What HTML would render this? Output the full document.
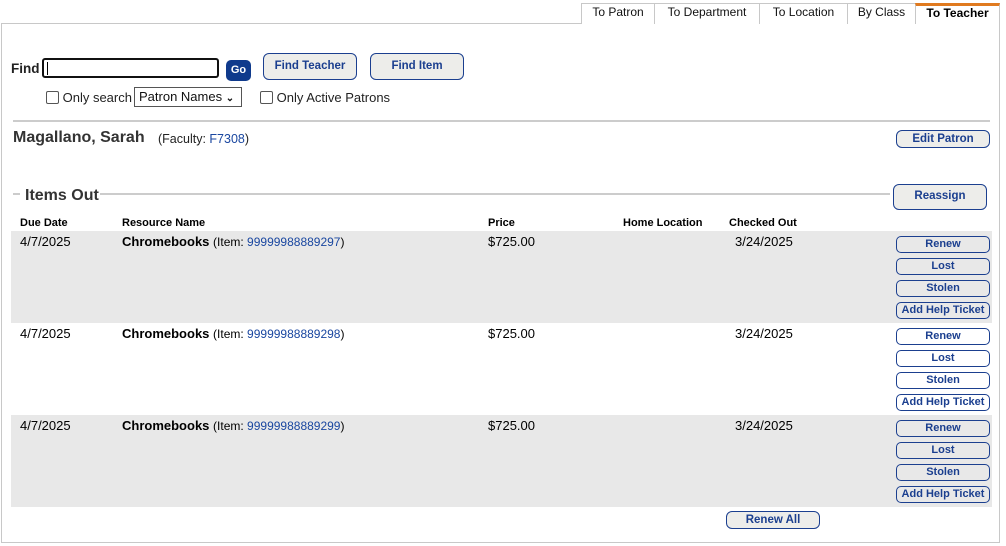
<!DOCTYPE html>
<html><head><meta charset="utf-8"><style>
*{box-sizing:border-box;margin:0;padding:0}
body{width:1006px;height:546px;background:#fff;font-family:"Liberation Sans",Arial,sans-serif;color:#000;position:relative;overflow:hidden}
.a{position:absolute;white-space:nowrap}
.tab{position:absolute;top:3px;height:21px;border:1px solid #c8c8c8;border-bottom:none;font-size:12px;text-align:center;line-height:17px;color:#111;background:#fff}
.box{position:absolute;left:1px;top:23px;width:999px;height:520px;border:1px solid #c8c8c8}
.btn{position:absolute;border:1px solid #1b3f8f;border-radius:6px;background:#ededea;color:#1b3f8f;font-family:"Liberation Sans",Arial,sans-serif;font-weight:bold;font-size:11.5px;text-align:center}
.sb{position:absolute;left:896px;width:94px;height:17px;border:1px solid #1b3f8f;border-radius:5px;color:#1b3f8f;font-family:"Liberation Sans",Arial,sans-serif;font-weight:bold;font-size:11px;line-height:15px;text-align:center;background:transparent}
.row{position:absolute;left:11px;width:981px;height:92px}
.t{font-size:13px}
.lnk{color:#1a47a0}
.hd{font-size:11px;font-weight:bold;top:217px}
.cb{display:inline-block;width:13px;height:13px;border:1px solid #555;border-radius:2px;vertical-align:-2px;background:#fff}
</style></head><body>
<div class="box"></div>
<div class="tab" style="left:581px;width:74px">To Patron</div>
<div class="tab" style="left:654px;width:106px">To Department</div>
<div class="tab" style="left:759px;width:89px">To Location</div>
<div class="tab" style="left:847px;width:69px">By Class</div>
<div class="tab" style="left:915px;width:85px;border-top:3px solid #e07a1f;line-height:15px;color:#000;height:21px;font-weight:bold;font-size:12px">To Teacher</div>

<div class="a" style="left:11px;top:61px;font-size:13.5px;font-weight:bold;color:#222">Find</div>
<div class="a" style="left:42px;top:58px;width:177px;height:20px;border:2px solid #111;border-radius:3px"><div style="position:absolute;left:3px;top:2px;width:1px;height:13px;background:#000"></div></div>
<div class="a" style="left:226px;top:60px;width:25px;height:21px;background:#0f3a8c;border-radius:5px;color:#fff;font-weight:bold;font-size:11px;text-align:center;line-height:21px">Go</div>
<div class="btn" style="left:263px;top:53px;width:94px;height:27px;line-height:24px">Find Teacher</div>
<div class="btn" style="left:370px;top:53px;width:94px;height:27px;line-height:24px">Find Item</div>
<div class="a" style="left:46px;top:90px;font-size:13px;color:#222"><span class="cb"></span> Only search</div>
<div class="a" style="left:134px;top:87px;width:108px;height:20px;border:1px solid #555;font-size:13px;line-height:18px;padding-left:4px;color:#111">Patron Names <span style="font-size:10px;font-weight:bold">&#8964;</span></div>
<div class="a" style="left:260px;top:90px;font-size:13px;color:#222"><span class="cb"></span> Only Active Patrons</div>

<div class="a" style="left:13px;top:120px;width:977px;height:2px;background:#ccc"></div>
<div class="a" style="left:13px;top:129px;font-size:16px;font-weight:bold;color:#333">Magallano, Sarah</div>
<div class="a" style="left:158px;top:132px;font-size:12.5px;color:#222">(Faculty: <span class="lnk">F7308</span>)</div>
<div class="btn" style="left:896px;top:130px;width:94px;height:18px;line-height:16px">Edit Patron</div>

<div class="a" style="left:13px;top:193px;width:7px;height:2px;background:#ccc"></div>
<div class="a" style="left:100px;top:193px;width:790px;height:2px;background:#ccc"></div>
<div class="a" style="left:25px;top:187px;font-size:16px;font-weight:bold;color:#333">Items Out</div>
<div class="btn" style="left:893px;top:184px;width:94px;height:26px;line-height:23px">Reassign</div>

<div class="a hd" style="left:20px">Due Date</div>
<div class="a hd" style="left:122px">Resource Name</div>
<div class="a hd" style="left:488px">Price</div>
<div class="a hd" style="left:623px">Home Location</div>
<div class="a hd" style="left:729px">Checked Out</div>

<div class="row" style="top:231px;background:#e8e8e8"></div>
<div class="row" style="top:415px;background:#e8e8e8"></div>

<div class="a t" style="left:20px;top:234px">4/7/2025</div>
<div class="a t" style="left:122px;top:234px"><b>Chromebooks</b> <span style="font-size:12px">(Item: <span class="lnk">99999988889297</span>)</span></div>
<div class="a t" style="left:488px;top:234px">$725.00</div>
<div class="a t" style="left:735px;top:234px">3/24/2025</div>
<div class="sb" style="top:236px">Renew</div><div class="sb" style="top:258px">Lost</div><div class="sb" style="top:280px">Stolen</div><div class="sb" style="top:302px">Add Help Ticket</div>

<div class="a t" style="left:20px;top:326px">4/7/2025</div>
<div class="a t" style="left:122px;top:326px"><b>Chromebooks</b> <span style="font-size:12px">(Item: <span class="lnk">99999988889298</span>)</span></div>
<div class="a t" style="left:488px;top:326px">$725.00</div>
<div class="a t" style="left:735px;top:326px">3/24/2025</div>
<div class="sb" style="top:328px">Renew</div><div class="sb" style="top:350px">Lost</div><div class="sb" style="top:372px">Stolen</div><div class="sb" style="top:394px">Add Help Ticket</div>

<div class="a t" style="left:20px;top:418px">4/7/2025</div>
<div class="a t" style="left:122px;top:418px"><b>Chromebooks</b> <span style="font-size:12px">(Item: <span class="lnk">99999988889299</span>)</span></div>
<div class="a t" style="left:488px;top:418px">$725.00</div>
<div class="a t" style="left:735px;top:418px">3/24/2025</div>
<div class="sb" style="top:420px">Renew</div><div class="sb" style="top:442px">Lost</div><div class="sb" style="top:464px">Stolen</div><div class="sb" style="top:486px">Add Help Ticket</div>

<div class="btn" style="left:726px;top:511px;width:94px;height:18px;line-height:16px">Renew All</div>
</body></html>
